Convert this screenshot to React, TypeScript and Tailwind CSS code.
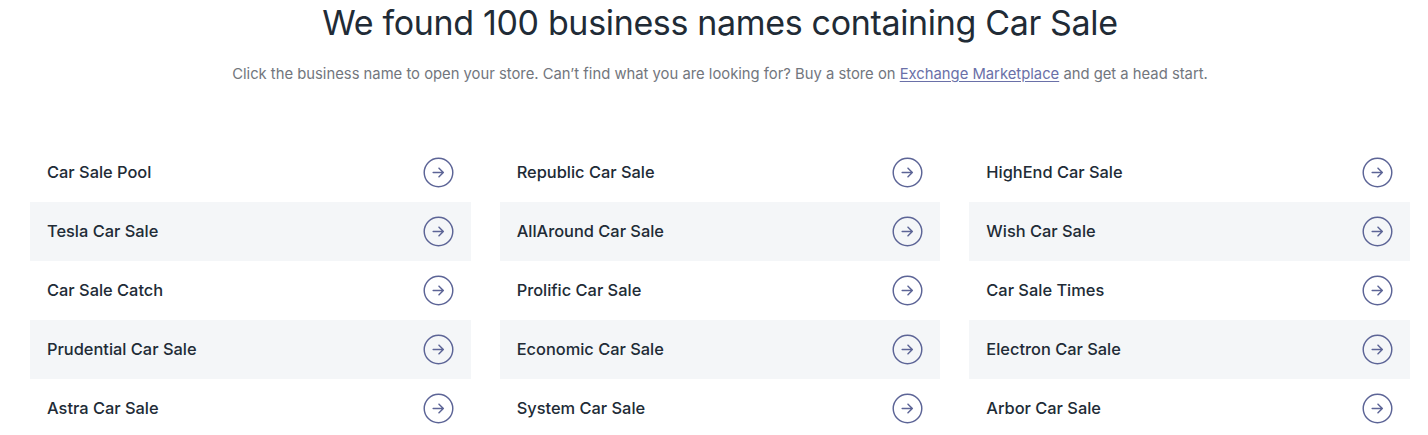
import React from 'react';

const names: string[][] = [
  ['Car Sale Pool', 'Republic Car Sale', 'HighEnd Car Sale'],
  ['Tesla Car Sale', 'AllAround Car Sale', 'Wish Car Sale'],
  ['Car Sale Catch', 'Prolific Car Sale', 'Car Sale Times'],
  ['Prudential Car Sale', 'Economic Car Sale', 'Electron Car Sale'],
  ['Astra Car Sale', 'System Car Sale', 'Arbor Car Sale'],
];

function ArrowCircle() {
  return (
    <svg width="31" height="31" viewBox="0 0 32 32" fill="none" className="shrink-0">
      <circle cx="16" cy="16" r="14.75" stroke="#5c6496" strokeWidth="1.5" />
      <path d="M10.5 16h10.5M16.5 11.5L21 16l-4.5 4.5" stroke="#5c6496" strokeWidth="1.5" strokeLinecap="round" strokeLinejoin="round" />
    </svg>
  );
}

export default function App() {
  return (
    <div className="h-[435px] w-full overflow-hidden bg-white font-['Inter',sans-serif] text-[#212b36]">
      <div className="pl-3">
        <h1 className="pt-[1px] text-center text-[34px] font-normal leading-[44px] tracking-[-0.01em]">
          We found 100 business names containing Car Sale
        </h1>
        <p className="mt-[17px] text-center text-[14.8px] leading-6 text-[#72767d]">
          Click the business name to open your store. Can’t find what you are looking for? Buy a store on{' '}
          <a href="#" className="text-[#6a70a8] underline underline-offset-2">Exchange Marketplace</a> and get a head start.
        </p>
      </div>

      <div className="mt-[57px] grid grid-cols-3 gap-x-[29px] pl-[30px] pr-[18px]">
        {names.map((row, r) =>
          row.map((name) => (
            <div
              key={name}
              className={`flex h-[59px] items-center justify-between pl-[17px] pr-[17px] ${r % 2 === 1 ? 'bg-[#f4f6f8]' : 'bg-white'}`}
            >
              <span className="text-[16.4px] font-medium text-[#212b36]">{name}</span>
              <ArrowCircle />
            </div>
          ))
        )}
      </div>
    </div>
  );
}
